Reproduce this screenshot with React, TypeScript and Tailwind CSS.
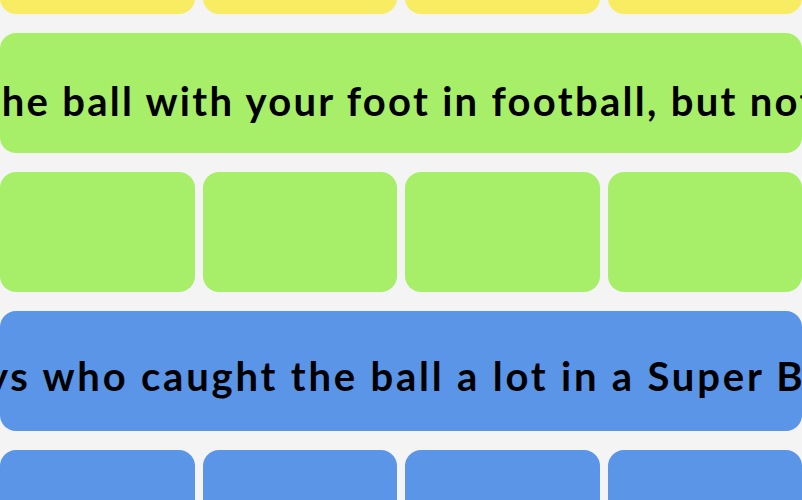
import React from "react";

type Group = {
  color: string;
  title: string;
  offset: string;
};

const groups: Group[] = [
  { color: "bg-[#a7ef69]", title: "Kick the ball with your foot in football, but not in soccer", offset: "ml-[-115px] pt-[16px] tracking-[2.3px]" },
  { color: "bg-[#5b95e8]", title: "Guys who caught the ball a lot in a Super Bowl", offset: "ml-[-70px] pt-[10px] tracking-[2.8px]" },
];

function TileRow({ color }: { color: string }) {
  return (
    <div className="grid grid-cols-4 gap-2">
      {[0, 1, 2, 3].map((i) => (
        <div key={i} className={`h-[119.5px] rounded-2xl ${color}`} />
      ))}
    </div>
  );
}

function SolvedBar({ group }: { group: Group }) {
  return (
    <div className={`h-[119.5px] rounded-2xl ${group.color} flex items-center justify-start overflow-hidden`}>
      <span className={`shrink-0 whitespace-nowrap text-[40px] font-bold text-black leading-none ${group.offset}`}>
        {group.title}
      </span>
    </div>
  );
}

export default function App() {
  return (
    <div className="h-[500px] w-[802px] overflow-hidden bg-[#f4f4f5] font-['Lato','Liberation_Sans',sans-serif]">
      <div className="mt-[-106px] flex flex-col gap-[19.5px]">
        <TileRow color="bg-[#f7ec62]" />
        <SolvedBar group={groups[0]} />
        <TileRow color="bg-[#a7ef69]" />
        <SolvedBar group={groups[1]} />
        <TileRow color="bg-[#5b95e8]" />
      </div>
    </div>
  );
}
